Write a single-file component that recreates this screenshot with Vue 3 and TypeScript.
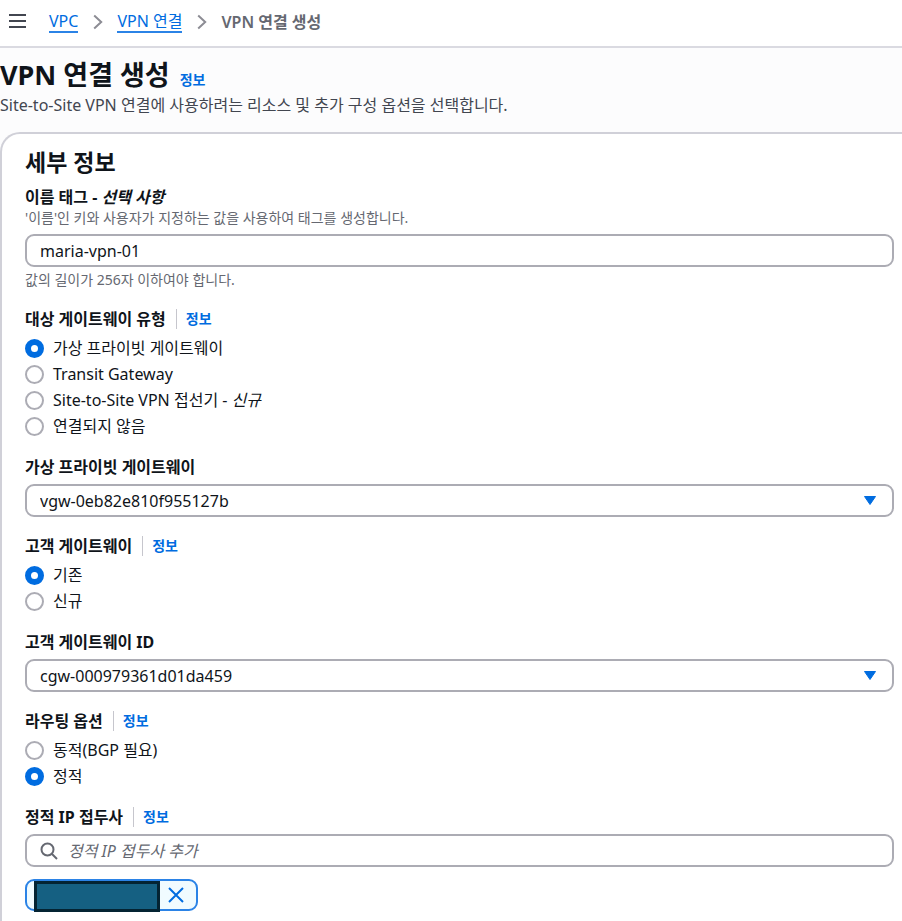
<script setup lang="ts">
import { ref } from 'vue'

interface Choice {
  value: string
  label: string
  note?: string
}

const nameTag = ref('maria-vpn-01')
const targetType = ref('vgw')
const virtualGateway = ref('vgw-0eb82e810f955127b')
const customerGateway = ref('existing')
const customerGatewayId = ref('cgw-000979361d01da459')
const routing = ref('static')
const prefix = ref('')
const hasPrefix = ref(true)

const targetTypes: Choice[] = [
  { value: 'vgw', label: '가상 프라이빗 게이트웨이' },
  { value: 'tgw', label: 'Transit Gateway' },
  { value: 'concentrator', label: 'Site-to-Site VPN 접선기 - ', note: '신규' },
  { value: 'none', label: '연결되지 않음' },
]
const customerGateways: Choice[] = [
  { value: 'existing', label: '기존' },
  { value: 'new', label: '신규' },
]
const routingOptions: Choice[] = [
  { value: 'dynamic', label: '동적(BGP 필요)' },
  { value: 'static', label: '정적' },
]
</script>

<template>
  <div class="page">
    <nav class="topbar">
      <button class="menu" type="button" aria-label="메뉴">
        <svg width="18" height="16" viewBox="0 0 18 16"><path d="M0 1h17M0 7h17M0 13h17" /></svg>
      </button>
      <ol class="crumbs">
        <li><a href="#vpc">VPC</a></li>
        <li>
          <svg class="chevron" width="10" height="16" viewBox="0 0 10 16"><path d="M1.2 1.5 8.2 8l-7 6.5" /></svg>
          <a href="#vpn">VPN 연결</a>
        </li>
        <li>
          <svg class="chevron" width="10" height="16" viewBox="0 0 10 16"><path d="M1.2 1.5 8.2 8l-7 6.5" /></svg>
          <span class="current">VPN 연결 생성</span>
        </li>
      </ol>
    </nav>

    <header class="intro">
      <div class="title-row">
        <h1>VPN 연결 생성</h1>
        <a class="info" href="#info">정보</a>
      </div>
      <p>Site-to-Site VPN 연결에 사용하려는 리소스 및 추가 구성 옵션을 선택합니다.</p>
    </header>

    <main class="panel">
      <h2>세부 정보</h2>

      <section class="field">
        <label class="label" for="name-tag">이름 태그 - <em>선택 사항</em></label>
        <p class="hint">'이름'인 키와 사용자가 지정하는 값을 사용하여 태그를 생성합니다.</p>
        <input id="name-tag" v-model="nameTag" class="control" type="text" />
        <p class="hint below">값의 길이가 256자 이하여야 합니다.</p>
      </section>

      <section class="field" role="radiogroup" aria-labelledby="target-label">
        <div class="label-row">
          <span id="target-label" class="label">대상 게이트웨이 유형</span>
          <a class="info divided" href="#info-target">정보</a>
        </div>
        <div class="choices">
          <label v-for="c in targetTypes" :key="c.value" class="choice">
            <input v-model="targetType" type="radio" name="target" :value="c.value" />
            <span>{{ c.label }}<em v-if="c.note">{{ c.note }}</em></span>
          </label>
        </div>
      </section>

      <section class="field">
        <label class="label" for="vgw">가상 프라이빗 게이트웨이</label>
        <div class="select">
          <select id="vgw" v-model="virtualGateway" class="control">
            <option>vgw-0eb82e810f955127b</option>
          </select>
          <svg class="caret" width="14" height="11" viewBox="0 0 14 11"><path d="M1.5 1.5h11L7 9.5z" /></svg>
        </div>
      </section>

      <section class="field" role="radiogroup" aria-labelledby="customer-label">
        <div class="label-row">
          <span id="customer-label" class="label">고객 게이트웨이</span>
          <a class="info divided" href="#info-customer">정보</a>
        </div>
        <div class="choices">
          <label v-for="c in customerGateways" :key="c.value" class="choice">
            <input v-model="customerGateway" type="radio" name="customer" :value="c.value" />
            <span>{{ c.label }}</span>
          </label>
        </div>
      </section>

      <section class="field">
        <label class="label" for="cgw">고객 게이트웨이 ID</label>
        <div class="select">
          <select id="cgw" v-model="customerGatewayId" class="control">
            <option>cgw-000979361d01da459</option>
          </select>
          <svg class="caret" width="14" height="11" viewBox="0 0 14 11"><path d="M1.5 1.5h11L7 9.5z" /></svg>
        </div>
      </section>

      <section class="field" role="radiogroup" aria-labelledby="routing-label">
        <div class="label-row">
          <span id="routing-label" class="label">라우팅 옵션</span>
          <a class="info divided" href="#info-routing">정보</a>
        </div>
        <div class="choices">
          <label v-for="c in routingOptions" :key="c.value" class="choice">
            <input v-model="routing" type="radio" name="routing" :value="c.value" />
            <span>{{ c.label }}</span>
          </label>
        </div>
      </section>

      <section class="field">
        <div class="label-row">
          <label class="label" for="prefix">정적 IP 접두사</label>
          <a class="info divided" href="#info-prefix">정보</a>
        </div>
        <div class="control search">
          <svg width="18" height="18" viewBox="0 0 18 18"><circle cx="7.5" cy="7.5" r="6" /><path d="m12 12 5 5" /></svg>
          <input id="prefix" v-model="prefix" type="text" placeholder="정적 IP 접두사 추가" />
        </div>
        <div v-if="hasPrefix" class="token">
          <span class="redacted"></span>
          <button type="button" aria-label="제거" @click="hasPrefix = false">
            <svg width="16" height="16" viewBox="0 0 16 16"><path d="m1 1 14 14M15 1 1 15" /></svg>
          </button>
        </div>
      </section>
    </main>
  </div>
</template>

<style>
body {
  margin: 0;
  background: #fcfcfd;
}
</style>

<style scoped>
.page {
  display: flex;
  flex-direction: column;
  min-height: 100vh;
  overflow-x: hidden;
  color: #0f141a;
  font-family: 'Noto Sans', 'Noto Sans CJK KR', sans-serif;
  font-size: 16px;
  line-height: 22px;
}
h1,
h2,
p,
ol {
  margin: 0;
  padding: 0;
}
a {
  color: #006ce0;
}
svg {
  display: block;
  flex: none;
  fill: none;
}
button {
  display: flex;
  padding: 0;
  border: 0;
  background: none;
  cursor: pointer;
}
.topbar {
  display: flex;
  align-items: center;
  gap: 22px;
  padding: 10px 9px 12px;
  border-bottom: 2px solid #dadae1;
  background: #fff;
}
.menu svg {
  stroke: #424650;
  stroke-width: 2;
}
.crumbs {
  display: flex;
  align-items: center;
  gap: 15px;
  height: 24px;
  list-style: none;
}
.crumbs li {
  display: flex;
  align-items: center;
  gap: 14px;
}
.crumbs a {
  border-bottom: 2px solid #2b83e6;
  line-height: 20px;
  text-decoration: none;
}
.chevron {
  stroke: #8c8c94;
  stroke-width: 2;
}
.current {
  color: #656871;
  font-weight: 600;
}
.intro {
  padding: 11px 0 15px;
}
.title-row {
  display: flex;
  align-items: baseline;
  gap: 10px;
}
h1 {
  font-size: 27px;
  font-weight: 700;
  line-height: 32px;
}
.info {
  font-size: 14px;
  font-weight: 700;
  line-height: 20px;
  text-decoration: none;
}
.intro p {
  margin-top: 2px;
  color: #424650;
  line-height: 24px;
}
.panel {
  display: flex;
  flex: 1;
  flex-direction: column;
  gap: 18px;
  padding: 13px 8px 8px 23px;
  border: 2px solid #d0d0d8;
  border-width: 2px 0 0 2px;
  border-radius: 20px 0 0 0;
  background: #fff;
}
h2 {
  margin-bottom: -9px;
  font-size: 23px;
  font-weight: 700;
  line-height: 30px;
}
.field {
  display: flex;
  flex-direction: column;
}
.label {
  font-weight: 700;
}
.label-row {
  display: flex;
  align-items: center;
  gap: 10px;
}
.divided {
  padding-left: 9px;
  border-left: 1px solid #c6c6cd;
}
.hint {
  color: #656871;
  font-size: 14px;
  line-height: 20px;
}
.below {
  margin-top: 3px;
}
.control {
  width: 100%;
  height: 33px;
  margin: 6px 0 0;
  padding: 0 13px;
  box-sizing: border-box;
  border: 2px solid #acacb4;
  border-radius: 9px;
  background: #fff;
  color: #0f141a;
  font: inherit;
  outline: 0;
}
.select {
  position: relative;
}
select.control {
  display: block;
  appearance: none;
}
.caret {
  position: absolute;
  right: 17px;
  bottom: 11px;
  fill: #006ce0;
  stroke: #006ce0;
  stroke-linejoin: round;
  pointer-events: none;
}
.choices {
  margin: 5px 0 -1px;
}
.choice {
  display: flex;
  align-items: center;
  gap: 9px;
  height: 26px;
}
.choice input {
  width: 19px;
  height: 19px;
  margin: 0;
  border: 2px solid #acacb4;
  border-radius: 50%;
  background: #fff;
  appearance: none;
}
.choice input:checked {
  border: 6px solid #006ce0;
}
.search {
  display: flex;
  align-items: center;
  gap: 10px;
}
.search svg {
  stroke: #656871;
  stroke-width: 2;
}
.search input {
  flex: 1;
  min-width: 0;
  padding: 0;
  border: 0;
  background: none;
  font: inherit;
  outline: 0;
}
.search input::placeholder {
  color: #656871;
  font-style: italic;
  opacity: 1;
}
.token {
  display: flex;
  align-items: center;
  align-self: flex-start;
  gap: 8px;
  height: 32px;
  margin-top: 12px;
  padding: 0 12px 0 7px;
  box-sizing: border-box;
  border: 2px solid #2b83e6;
  border-radius: 9px;
  background: #f0fbff;
}
.redacted {
  width: 126px;
  height: 31px;
  margin-top: 2px;
  box-sizing: border-box;
  border: 3px solid #042433;
  background: #156082;
}
.token svg {
  stroke: #006ce0;
  stroke-width: 2;
}
</style>
